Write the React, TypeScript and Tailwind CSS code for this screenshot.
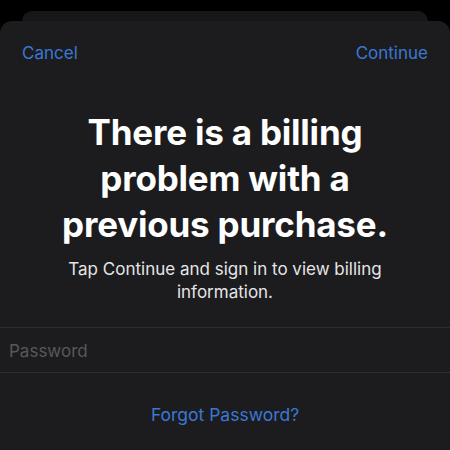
export default function App() {
  return (
    <div
      className="w-[450px] h-[450px] bg-black overflow-hidden flex flex-col"
      style={{ fontFamily: "Inter, 'Liberation Sans', sans-serif" }}
    >
      <div className="mt-[11px] mx-[22px] h-[10px] shrink-0 rounded-t-[12px] bg-[#171718]" />
      <div className="flex-1 rounded-t-[12px] bg-[#1c1c1e] flex flex-col">
        <div className="flex justify-between px-[22px] pt-[20px] text-[17px] text-[#3a78d4]">
          <span>Cancel</span>
          <span>Continue</span>
        </div>
        <h1 className="mt-[42px] px-[36px] text-center text-[35px] leading-[46px] font-bold text-white tracking-[-0.2px]">
          There is a billing problem with a previous purchase.
        </h1>
        <p className="mt-[11px] px-[56px] text-center text-[17px] leading-[23px] text-[#e5e5e7]">
          Tap Continue and sign in to view billing information.
        </p>
        <div className="mt-[23px] border-t border-[#2c2c2e]" />
        <div className="h-[44px] flex items-center pl-[9px] pt-[4px] text-[17px] text-[#58585c]">
          Password
        </div>
        <div className="border-t border-[#2e2e30]" />
        <div className="mt-[29px] text-center text-[17.5px] text-[#3a78d4]">Forgot Password?</div>
      </div>
    </div>
  );
}
